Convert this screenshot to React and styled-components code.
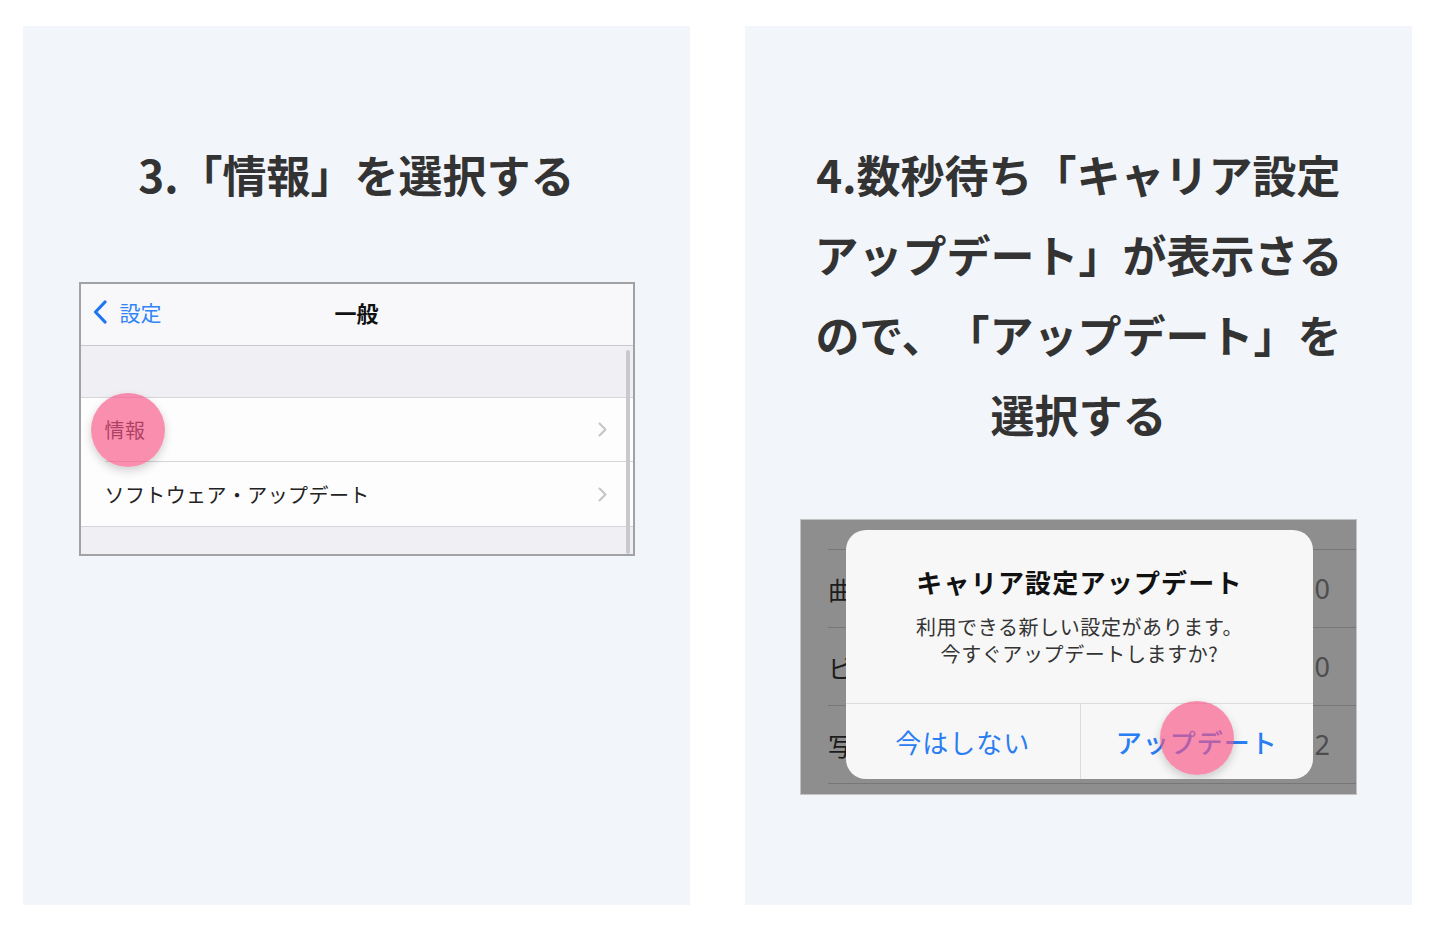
import React from 'react';
import styled, { createGlobalStyle } from 'styled-components';

const GlobalStyle = createGlobalStyle`
  html, body {
    margin: 0;
    background: #fff;
  }
  body {
    font-family: "Noto Sans CJK JP", "Noto Sans", sans-serif;
    color: #333;
    text-spacing-trim: space-all;
  }
`;

const Page = styled.main`
  display: grid;
  grid-template-columns: repeat(2, 667px);
  column-gap: 55px;
  padding: 26px 0 22px 23px;
`;

const Panel = styled.section`
  height: 879px;
  box-sizing: border-box;
  padding-top: 108px;
  background: #f2f5f9;
  display: flex;
  flex-direction: column;
  align-items: center;
`;

const Heading = styled.h2`
  margin: 0 0 ${p => p.$gap}px;
  font-size: 44px;
  line-height: 80px;
  font-weight: 700;
  text-align: center;
  color: #333;
  text-spacing-trim: space-all;
`;

/* tap marker drawn over the pressed item */
const Tap = styled.span`
  position: relative;
  display: inline-block;
`;

const TapMark = styled.span`
  position: absolute;
  left: calc(50% + ${p => p.$dx || 0}px);
  top: calc(50% + ${p => p.$dy || 0}px);
  width: 74px;
  height: 74px;
  border-radius: 50%;
  transform: translate(-50%, -50%);
  background: rgba(249, 83, 134, 0.65);
  box-shadow: 0 4px 10px rgba(0, 0, 0, 0.18);
  pointer-events: none;
`;

/* ---- step 3: settings screen ---- */

const Shot = styled.div`
  position: relative;
  width: 556px;
  box-sizing: border-box;
  border: 2px solid #a2a2a4;
  background: #efeff4;
  overflow: hidden;
`;

const NavBar = styled.div`
  display: grid;
  grid-template-columns: 1fr auto 1fr;
  align-items: center;
  height: 62px;
  box-sizing: border-box;
  padding: 0 12px 5px;
  background: #f8f8fa;
  border-bottom: 1px solid #c9c9cd;
`;

const BackLink = styled.div`
  display: flex;
  align-items: center;
  gap: 13px;
  font-size: 21px;
  color: #3184f5;
`;

const NavTitle = styled.div`
  font-size: 22px;
  font-weight: 700;
  color: #111;
`;

const SectionGap = styled.div`
  height: ${p => p.$h}px;
`;

const List = styled.div`
  background: #fdfdfd;
  border-top: 1px solid #d6d6da;
  border-bottom: 1px solid #d6d6da;
`;

const Row = styled.div`
  display: flex;
  align-items: center;
  justify-content: space-between;
  height: ${p => p.$h}px;
  padding: 0 26px 0 24px;
  font-size: 20px;
  letter-spacing: 0.4px;
  color: #222;
`;

const Divider = styled.div`
  height: 1px;
  margin-left: 24px;
  background: #d6d6da;
`;

const ScrollBar = styled.div`
  position: absolute;
  right: 3px;
  top: 66px;
  bottom: 0;
  width: 4px;
  border-radius: 2px;
  background: #c9c9cd;
`;

const Chevron = () => (
  <svg width="9" height="15" viewBox="0 0 9 15" fill="none">
    <path d="M1.5 1.5 L7.5 7.5 L1.5 13.5" stroke="#c4c4c8" strokeWidth="2" strokeLinecap="round" strokeLinejoin="round" />
  </svg>
);

const BackChevron = () => (
  <svg width="14" height="24" viewBox="0 0 14 24" fill="none">
    <path d="M12 2 L2.5 12 L12 22" stroke="#1d74f5" strokeWidth="3.2" strokeLinecap="round" strokeLinejoin="round" />
  </svg>
);

/* ---- step 4: carrier update alert ---- */

const Screen = styled.div`
  position: relative;
  width: 557px;
  height: 276px;
  box-sizing: border-box;
  border: 1px solid #c2c2c2;
  background: #8e8e8e;
  overflow: hidden;
  padding-top: 29px;
`;

const DimRow = styled.div`
  display: flex;
  align-items: center;
  justify-content: space-between;
  height: 78px;
  box-sizing: border-box;
  margin-left: 27px;
  padding-right: 26px;
  border-top: 1px solid #777;
`;

const DimLabel = styled.span`
  font-size: 25px;
  color: #1c1c1c;
`;

const DimCount = styled.span`
  font-family: "Noto Sans", sans-serif;
  font-size: 27px;
  color: #4d4d4f;
`;

const Alert = styled.div`
  position: absolute;
  left: 45px;
  top: 10px;
  width: 467px;
  height: 249px;
  border-radius: 20px;
  background: #f7f7f7;
  display: flex;
  flex-direction: column;
  overflow: hidden;
`;

const AlertBody = styled.div`
  flex: 1;
  padding-top: 35px;
  text-align: center;
`;

const AlertTitle = styled.div`
  font-size: 26px;
  line-height: 34px;
  font-weight: 700;
  letter-spacing: 1.2px;
  color: #111;
`;

const AlertMessage = styled.div`
  margin-top: 14px;
  font-size: 20px;
  line-height: 27px;
  letter-spacing: 0.6px;
  color: #333;
`;

const AlertActions = styled.div`
  display: grid;
  grid-template-columns: 1fr 1fr;
  height: 75px;
  border-top: 1px solid #dcdcdc;
`;

const AlertButton = styled.div`
  display: flex;
  align-items: center;
  justify-content: center;
  font-size: 26px;
  letter-spacing: 1px;
  font-weight: ${p => (p.$primary ? 500 : 400)};
  color: #2a7df2;
  & + & {
    border-left: 1px solid #dcdcdc;
  }
`;

const dimRows = [
  { label: '曲', count: '0' },
  { label: 'ビデオ', count: '0' },
  { label: '写真', count: '2' },
  { label: '', count: '' },
];

export default function App() {
  return (
    <>
      <GlobalStyle />
      <Page>
        <Panel>
          <Heading $gap={68}>3.「情報」を選択する</Heading>
          <Shot>
            <NavBar>
              <BackLink>
                <BackChevron />
                設定
              </BackLink>
              <NavTitle>一般</NavTitle>
              <span />
            </NavBar>
            <SectionGap $h={51} />
            <List>
              <Row $h={63}>
                <Tap>
                  情報
                  <TapMark $dx={3} />
                </Tap>
                <Chevron />
              </Row>
              <Divider />
              <Row $h={64}>
                ソフトウェア・アップデート
                <Chevron />
              </Row>
            </List>
            <SectionGap $h={27} />
            <ScrollBar />
          </Shot>
        </Panel>

        <Panel>
          <Heading $gap={65}>
            4.数秒待ち「キャリア設定
            <br />
            アップデート」が表示さる
            <br />
            ので、「アップデート」を
            <br />
            選択する
          </Heading>
          <Screen>
            {dimRows.map((r, i) => (
              <DimRow key={i}>
                <DimLabel>{r.label}</DimLabel>
                <DimCount>{r.count}</DimCount>
              </DimRow>
            ))}
            <Alert>
              <AlertBody>
                <AlertTitle>キャリア設定アップデート</AlertTitle>
                <AlertMessage>
                  利用できる新しい設定があります。
                  <br />
                  今すぐアップデートしますか?
                </AlertMessage>
              </AlertBody>
              <AlertActions>
                <AlertButton>今はしない</AlertButton>
                <AlertButton $primary>
                  <Tap>
                    アップデート
                    <TapMark $dy={-4} />
                  </Tap>
                </AlertButton>
              </AlertActions>
            </Alert>
          </Screen>
        </Panel>
      </Page>
    </>
  );
}
